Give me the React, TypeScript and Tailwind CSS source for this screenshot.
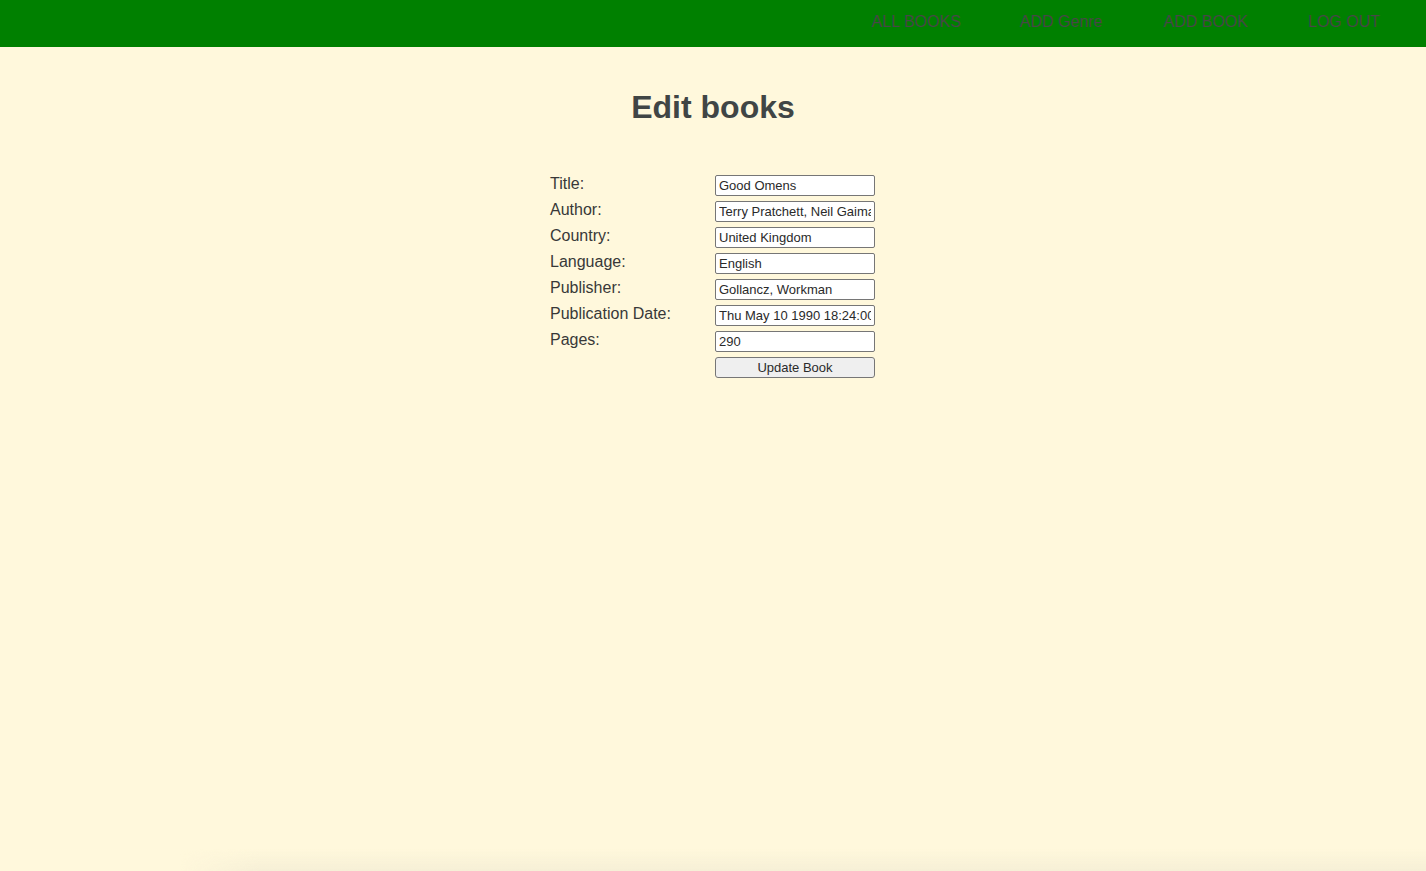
const fields = [
    { label: 'Title:', value: 'Good Omens' },
    { label: 'Author:', value: 'Terry Pratchett, Neil Gaiman' },
    { label: 'Country:', value: 'United Kingdom' },
    { label: 'Language:', value: 'English' },
    { label: 'Publisher:', value: 'Gollancz, Workman' },
    { label: 'Publication Date:', value: 'Thu May 10 1990 18:24:00 GMT+0100' },
    { label: 'Pages:', value: '290' },
]

export default function App() {
    return (
        <div className="relative min-h-[871px] bg-[#fff8dc] font-['Liberation_Sans',Arial,sans-serif] overflow-hidden">
            <nav className="h-[47px] bg-[#008000] flex justify-end items-start pt-[13px] pr-[46px] text-[16px] leading-[18px] text-[#474747]">
                <a href="#">ALL BOOKS</a>
                <a href="#" className="ml-[59px]">ADD Genre</a>
                <a href="#" className="ml-[61px]">ADD BOOK</a>
                <a href="#" className="ml-[60px]">LOG OUT</a>
            </nav>
            <h1 className="mt-[42px] text-center text-[32px] leading-[37px] font-bold text-[#404545]">
                Edit books
            </h1>
            <form className="mt-[49px] mx-auto w-[326px] grid grid-cols-[165px_160px] gap-y-[5px]">
                {fields.map((f) => (
                    <div key={f.label} className="contents">
                        <label className="text-[16px] leading-[18px] text-[#383838] h-[21px]">
                            {f.label}
                        </label>
                        <input
                            type="text"
                            defaultValue={f.value}
                            className="h-[21px] w-[160px] bg-white border border-[#767676] rounded-[2px] px-[3px] text-[13px] text-[#2a2a2a] outline-none"
                        />
                    </div>
                ))}
                <div />
                <button
                    type="button"
                    className="h-[21px] w-[160px] bg-[#efefef] border border-[#767676] rounded-[3px] text-[13px] text-[#2a2a2a]"
                >
                    Update Book
                </button>
            </form>
            <div className="absolute bottom-0 left-[180px] right-0 h-[22px] bg-gradient-to-b from-transparent to-[#f6efd6] [mask-image:linear-gradient(to_right,transparent,black_80px)]" />
        </div>
    )
}
